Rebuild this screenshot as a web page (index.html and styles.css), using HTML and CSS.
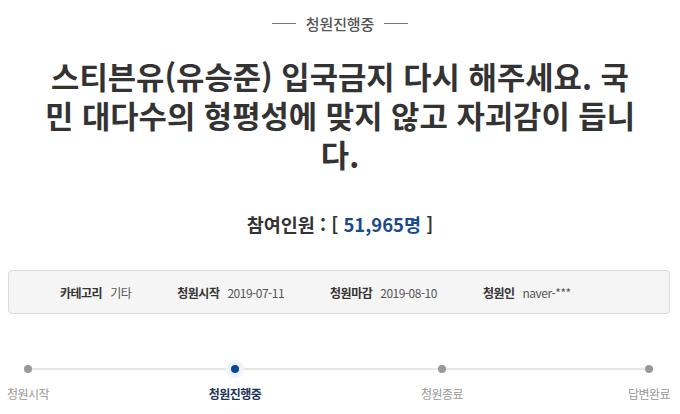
FILE: index.html
```html
<!DOCTYPE html>
<html lang="ko">
<head>
<meta charset="utf-8">
<link rel="stylesheet" href="styles.css">
</head>
<body>
<div class="page">
  <div class="status"><span class="dash"></span><span class="status-text">청원진행중</span><span class="dash"></span></div>
  <h1 class="title">스티븐유(유승준) 입국금지 다시 해주세요. 국민 대다수의 형평성에 맞지 않고 자괴감이 듭니다.</h1>
  <p class="count">참여인원 : [ <span class="num">51,965명</span> ]</p>
  <div class="info">
    <div class="info-item"><span class="info-label">카테고리</span><span class="info-value">기타</span></div>
    <div class="info-item"><span class="info-label">청원시작</span><span class="info-value">2019-07-11</span></div>
    <div class="info-item"><span class="info-label">청원마감</span><span class="info-value">2019-08-10</span></div>
    <div class="info-item"><span class="info-label">청원인</span><span class="info-value">naver-***</span></div>
  </div>
  <div class="progress">
    <div class="step"><span class="dot"></span><span class="step-label">청원시작</span></div>
    <div class="step active"><span class="dot"></span><span class="step-label">청원진행중</span></div>
    <div class="step"><span class="dot"></span><span class="step-label">청원종료</span></div>
    <div class="step"><span class="dot"></span><span class="step-label">답변완료</span></div>
  </div>
</div>
</body>
</html>
```
FILE: styles.css
```css
* { box-sizing: border-box; }
html, body { margin: 0; padding: 0; background: #fff; }
body { font-family: "Noto Sans CJK KR", "Noto Sans", sans-serif; color: #333; }
.page { width: 680px; height: 414px; overflow: hidden; display: flex; flex-direction: column; }
.status { display: flex; justify-content: center; align-items: center; gap: 10px; padding-top: 13px; height: 34px; }
.dash { width: 24px; height: 1px; background: #777; }
.status-text { font-size: 15px; color: #555; font-weight: 500; line-height: 20px; letter-spacing: -0.1px; }
.title { margin: 22px 44px 0; font-size: 30.8px; line-height: 39px; font-weight: 700; text-align: center; color: #333; letter-spacing: 0; word-break: break-all; }
.count { margin: 38px 0 0; text-align: center; font-size: 18.5px; font-weight: 700; line-height: 26px; color: #333; }
.num { color: #1b4a8c; }
.info { margin: 33px 10px 0 8px; height: 44px; border: 1px solid #dcdcdc; border-radius: 4px; background: #f5f5f5; display: flex; align-items: center; padding-left: 51px; gap: 46px; font-size: 12px; letter-spacing: -0.5px; }
.info-item { display: flex; gap: 8px; align-items: baseline; }
.info-label { font-weight: 700; color: #333; }
.info-value { color: #555; }
.progress { position: relative; display: flex; justify-content: space-between; margin: 50px 4px 0 1px; }
.progress::before { content: ""; position: absolute; left: 27px; right: 27px; top: 4px; height: 2px; background: #e6e6e6; }
.step { position: relative; width: 54px; display: flex; flex-direction: column; align-items: center; gap: 13px; }
.dot { width: 8px; height: 8px; border-radius: 50%; background: #999; margin-top: 1px; }
.step-label { font-size: 12px; letter-spacing: -0.5px; color: #999; line-height: 16px; white-space: nowrap; }
.step.active .dot { background: #0c459a; box-shadow: 0 0 0 5px #eef4fb; }
.step.active .step-label { color: #1c3358; font-weight: 700; }
```
